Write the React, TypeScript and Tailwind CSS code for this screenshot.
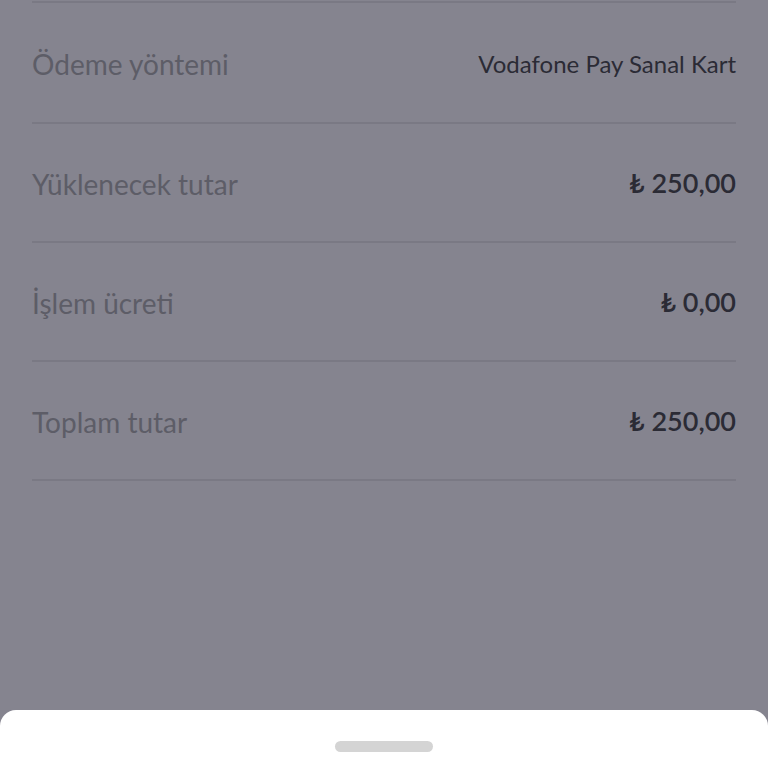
const rows = [
  { label: "Ödeme yöntemi", value: "Vodafone Pay Sanal Kart", bold: false },
  { label: "Yüklenecek tutar", value: "₺ 250,00", bold: true },
  { label: "İşlem ücreti", value: "₺ 0,00", bold: true },
  { label: "Toplam tutar", value: "₺ 250,00", bold: true },
];

export default function App() {
  return (
    <div
      className="flex h-[768px] w-[768px] flex-col overflow-hidden bg-[#85848f]"
      style={{ fontFamily: "Lato, 'Open Sans', 'DejaVu Sans', sans-serif" }}
    >
      <div className="flex-1 px-8 pt-[1px]">
        <div className="h-[2px] bg-[#7a7984]" />
        {rows.map((row, i) => (
          <div key={row.label}>
            <div
              className={`flex items-center justify-between pt-[2px] ${
                i === 0 ? "h-[119px]" : "h-[117px]"
              }`}
            >
              <span className="text-[28px] text-[#5d5d67]">{row.label}</span>
              <span
                className={`text-[#2b2b35] ${
                  row.bold ? "text-[27px] font-semibold" : "text-[24px]"
                }`}
              >
                {row.value}
              </span>
            </div>
            <div className="h-[2px] bg-[#7a7984]" />
          </div>
        ))}
      </div>
      <div className="flex h-[58px] justify-center rounded-t-[16px] bg-white pt-[31px]">
        <div className="h-[11px] w-[98px] rounded-full bg-[#d4d4d4]" />
      </div>
    </div>
  );
}
